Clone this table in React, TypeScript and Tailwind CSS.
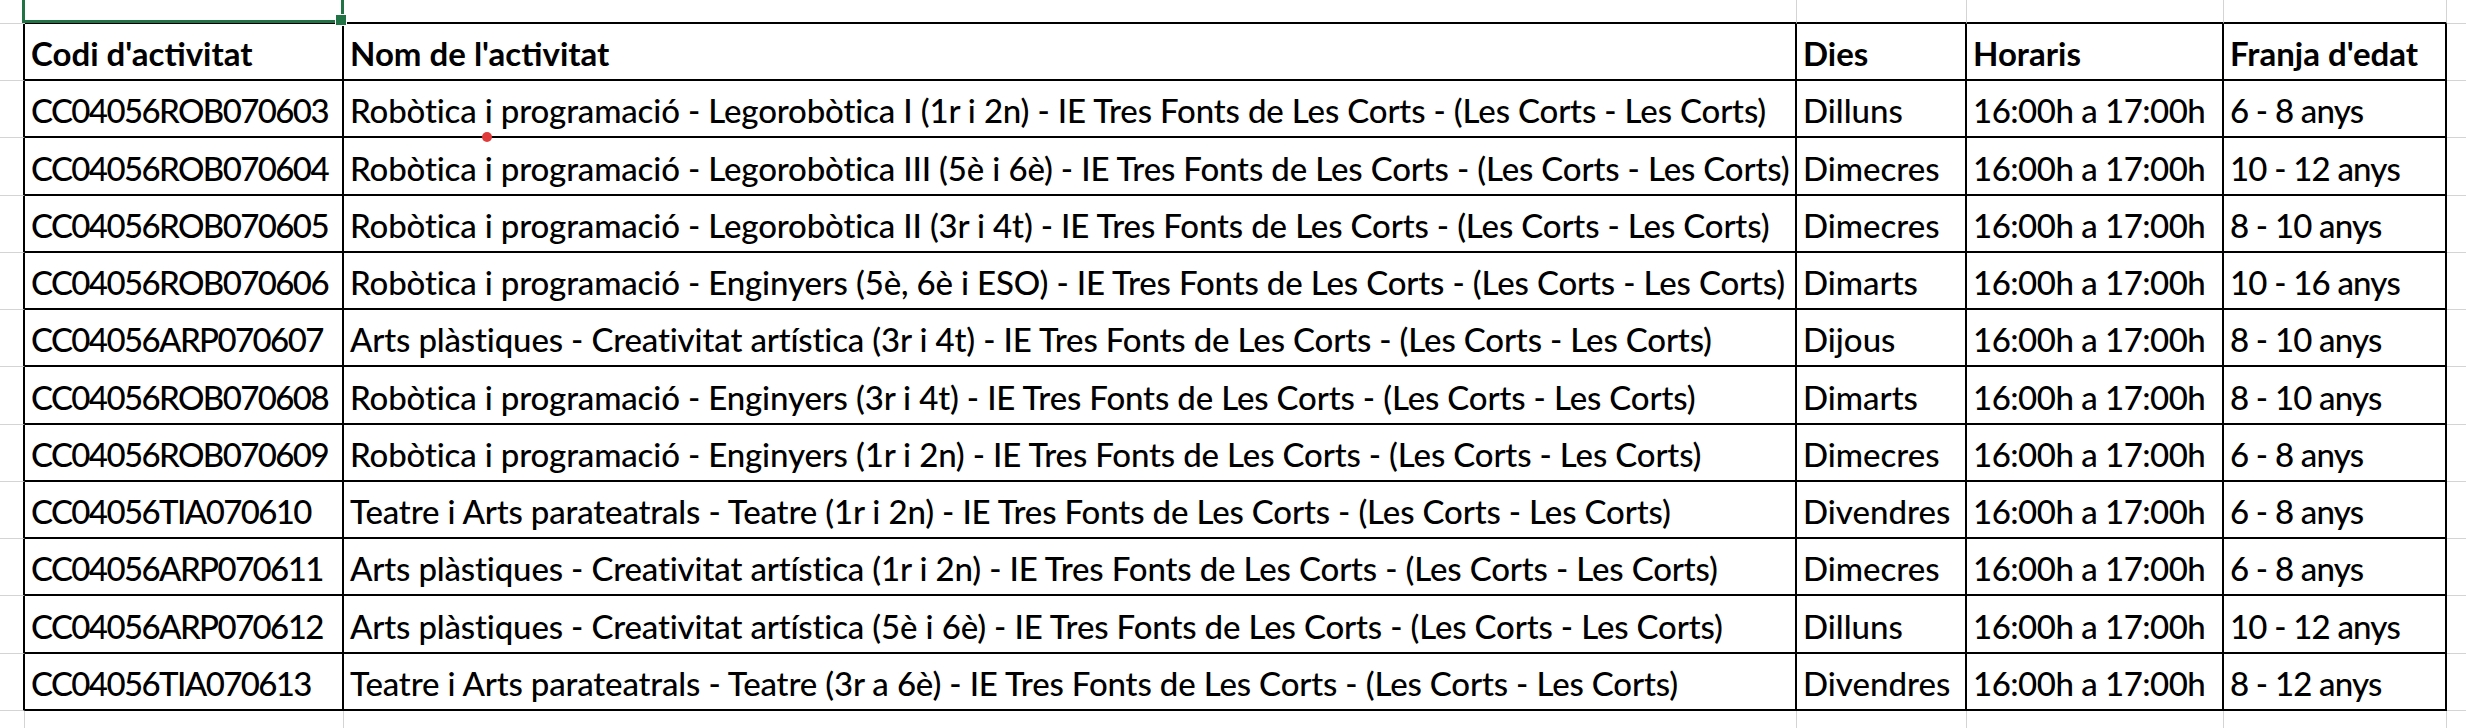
const rows = [
  ["CC04056ROB070603", "Robòtica i programació - Legorobòtica I (1r i 2n) - IE Tres Fonts de Les Corts - (Les Corts - Les Corts)", "Dilluns", "6 - 8 anys"],
  ["CC04056ROB070604", "Robòtica i programació - Legorobòtica III (5è i 6è) - IE Tres Fonts de Les Corts - (Les Corts - Les Corts)", "Dimecres", "10 - 12 anys"],
  ["CC04056ROB070605", "Robòtica i programació - Legorobòtica II (3r i 4t) - IE Tres Fonts de Les Corts - (Les Corts - Les Corts)", "Dimecres", "8 - 10 anys"],
  ["CC04056ROB070606", "Robòtica i programació - Enginyers (5è, 6è i ESO) - IE Tres Fonts de Les Corts - (Les Corts - Les Corts)", "Dimarts", "10 - 16 anys"],
  ["CC04056ARP070607", "Arts plàstiques - Creativitat artística (3r i 4t) - IE Tres Fonts de Les Corts - (Les Corts - Les Corts)", "Dijous", "8 - 10 anys"],
  ["CC04056ROB070608", "Robòtica i programació - Enginyers (3r i 4t) - IE Tres Fonts de Les Corts - (Les Corts - Les Corts)", "Dimarts", "8 - 10 anys"],
  ["CC04056ROB070609", "Robòtica i programació - Enginyers (1r i 2n) - IE Tres Fonts de Les Corts - (Les Corts - Les Corts)", "Dimecres", "6 - 8 anys"],
  ["CC04056TIA070610", "Teatre i Arts parateatrals - Teatre (1r i 2n) - IE Tres Fonts de Les Corts - (Les Corts - Les Corts)", "Divendres", "6 - 8 anys"],
  ["CC04056ARP070611", "Arts plàstiques - Creativitat artística (1r i 2n) - IE Tres Fonts de Les Corts - (Les Corts - Les Corts)", "Dimecres", "6 - 8 anys"],
  ["CC04056ARP070612", "Arts plàstiques - Creativitat artística (5è i 6è) - IE Tres Fonts de Les Corts - (Les Corts - Les Corts)", "Dilluns", "10 - 12 anys"],
  ["CC04056TIA070613", "Teatre i Arts parateatrals - Teatre (3r a 6è) - IE Tres Fonts de Les Corts - (Les Corts - Les Corts)", "Divendres", "8 - 12 anys"],
];

// excel rows don't land on whole pixels, so a few are 1px taller
const tall = [1, 5, 9];

const grid = "grid grid-cols-[25px_319px_1453px_170px_257px_223px_1fr]";
const cell = "flex items-end overflow-hidden whitespace-nowrap border-r-2 border-b-2 border-black pl-[6px] pb-[9px] leading-none";
// Lato runs wider than Calibri, tighten per column so the widths line up
const colFit = ["tracking-[-1.6px]", "tracking-[-0.15px]", "", "tracking-[-0.5px]", "tracking-[-0.8px]"];

function Row({ cells, bold, height }: { cells: string[]; bold?: boolean; height: string }) {
  return (
    <div className={`${grid} ${height}`}>
      <div className="border-r-2 border-b border-r-black border-b-[#d4d4d4]" />
      {cells.map((c, i) => (
        <div key={i} className={`${cell} ${bold ? "font-bold" : `font-medium ${colFit[i]}`}`}>
          {c}
        </div>
      ))}
      <div className="border-b border-[#d4d4d4]" />
    </div>
  );
}

export default function App() {
  return (
    <div className="relative flex h-[728px] w-[2466px] flex-col overflow-hidden bg-white text-[33px] text-black font-[family-name:Lato,sans-serif]">
      {/* strip of the row above the table, first cell selected */}
      <div className={`${grid} h-[24px] shrink-0`}>
        <div className="border-r border-b border-[#d4d4d4]" />
        <div className="relative border-b-2 border-r border-b-black border-r-[#d4d4d4]">
          <div className="absolute -left-[3px] -right-[1px] -bottom-[1px] -top-[4px] z-10 border-[3px] border-[#217346]">
            <div className="absolute -right-[6px] -bottom-[6px] h-[12px] w-[12px] border border-white bg-[#217346]" />
          </div>
        </div>
        {[0, 1, 2, 3].map((i) => (
          <div key={i} className="border-b-2 border-r border-b-black border-r-[#d4d4d4]" />
        ))}
        <div className="border-b border-[#d4d4d4]" />
      </div>

      <Row cells={["Codi d'activitat", "Nom de l'activitat", "Dies", "Horaris", "Franja d'edat"]} bold height="h-[57px] shrink-0" />

      {rows.map((r, i) => (
        <Row
          key={r[0]}
          cells={[r[0], r[1], r[2], "16:00h a 17:00h", r[3]]}
          height={tall.includes(i) ? "h-[58px] shrink-0" : "h-[57px] shrink-0"}
        />
      ))}

      {/* empty row under the table */}
      <div className={`${grid} flex-1`}>
        {[0, 1, 2, 3, 4, 5].map((i) => (
          <div key={i} className="border-r border-[#d4d4d4]" />
        ))}
        <div />
      </div>

      {/* stray red marker on the first row line */}
      <div className="absolute left-[482px] top-[132px] h-[10px] w-[10px] rounded-full bg-[#e03a3a]" />
    </div>
  );
}
